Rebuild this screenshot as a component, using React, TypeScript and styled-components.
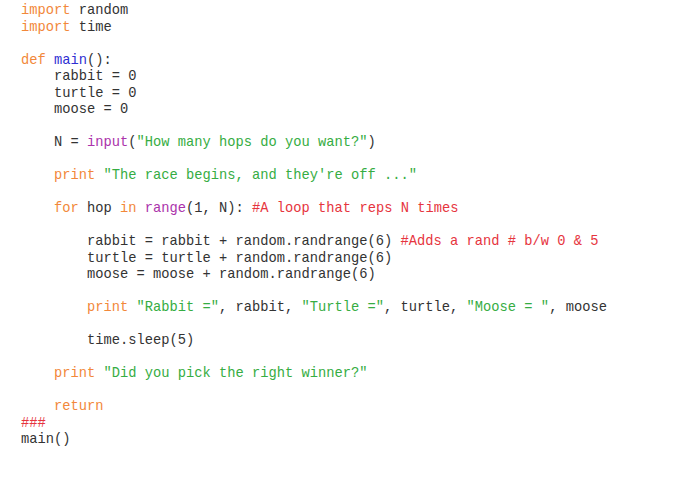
import React from "react";
import styled, { createGlobalStyle } from "styled-components";

const Global = createGlobalStyle`
  html, body { margin: 0; padding: 0; background: #ffffff; }
`;

type Kind = "kw" | "str" | "com" | "bi" | "fn" | "txt";

const colors: Record<Kind, string> = {
  kw: "#f2883a",
  str: "#36ad43",
  com: "#e6353e",
  bi: "#ab33ab",
  fn: "#2f2fd2",
  txt: "#333333",
};

const Editor = styled.pre`
  margin: 0;
  padding: 3px 0 0 21px;
  font-family: "Liberation Mono", "Courier New", monospace;
  font-size: 13.75px;
  line-height: 16.5px;
  color: #333333;
  background: #ffffff;
  white-space: pre;
`;

const Line = styled.div`
  height: 16.5px;
`;

const Tok = styled.span<{ $k: Kind }>`
  color: ${(p) => colors[p.$k]};
`;

type Seg = [Kind, string];

const code: Seg[][] = [
  [["kw", "import"], ["txt", " random"]],
  [["kw", "import"], ["txt", " time"]],
  [],
  [["kw", "def"], ["txt", " "], ["fn", "main"], ["txt", "():"]],
  [["txt", "    rabbit = 0"]],
  [["txt", "    turtle = 0"]],
  [["txt", "    moose = 0"]],
  [],
  [["txt", "    N = "], ["bi", "input"], ["txt", "("], ["str", '"How many hops do you want?"'], ["txt", ")"]],
  [],
  [["txt", "    "], ["kw", "print"], ["txt", " "], ["str", '"The race begins, and they\'re off ..."']],
  [],
  [["txt", "    "], ["kw", "for"], ["txt", " hop "], ["kw", "in"], ["txt", " "], ["bi", "range"], ["txt", "(1, N): "], ["com", "#A loop that reps N times"]],
  [],
  [["txt", "        rabbit = rabbit + random.randrange(6) "], ["com", "#Adds a rand # b/w 0 & 5"]],
  [["txt", "        turtle = turtle + random.randrange(6)"]],
  [["txt", "        moose = moose + random.randrange(6)"]],
  [],
  [["txt", "        "], ["kw", "print"], ["txt", " "], ["str", '"Rabbit ="'], ["txt", ", rabbit, "], ["str", '"Turtle ="'], ["txt", ", turtle, "], ["str", '"Moose = "'], ["txt", ", moose"]],
  [],
  [["txt", "        time.sleep(5)"]],
  [],
  [["txt", "    "], ["kw", "print"], ["txt", " "], ["str", '"Did you pick the right winner?"']],
  [],
  [["txt", "    "], ["kw", "return"]],
  [["com", "###"]],
  [["txt", "main()"]],
];

export default function App() {
  return (
    <>
      <Global />
      <Editor>
        {code.map((line, i) => (
          <Line key={i}>
            {line.length === 0
              ? " "
              : line.map(([k, t], j) => (
                  <Tok key={j} $k={k}>
                    {t}
                  </Tok>
                ))}
          </Line>
        ))}
      </Editor>
    </>
  );
}
